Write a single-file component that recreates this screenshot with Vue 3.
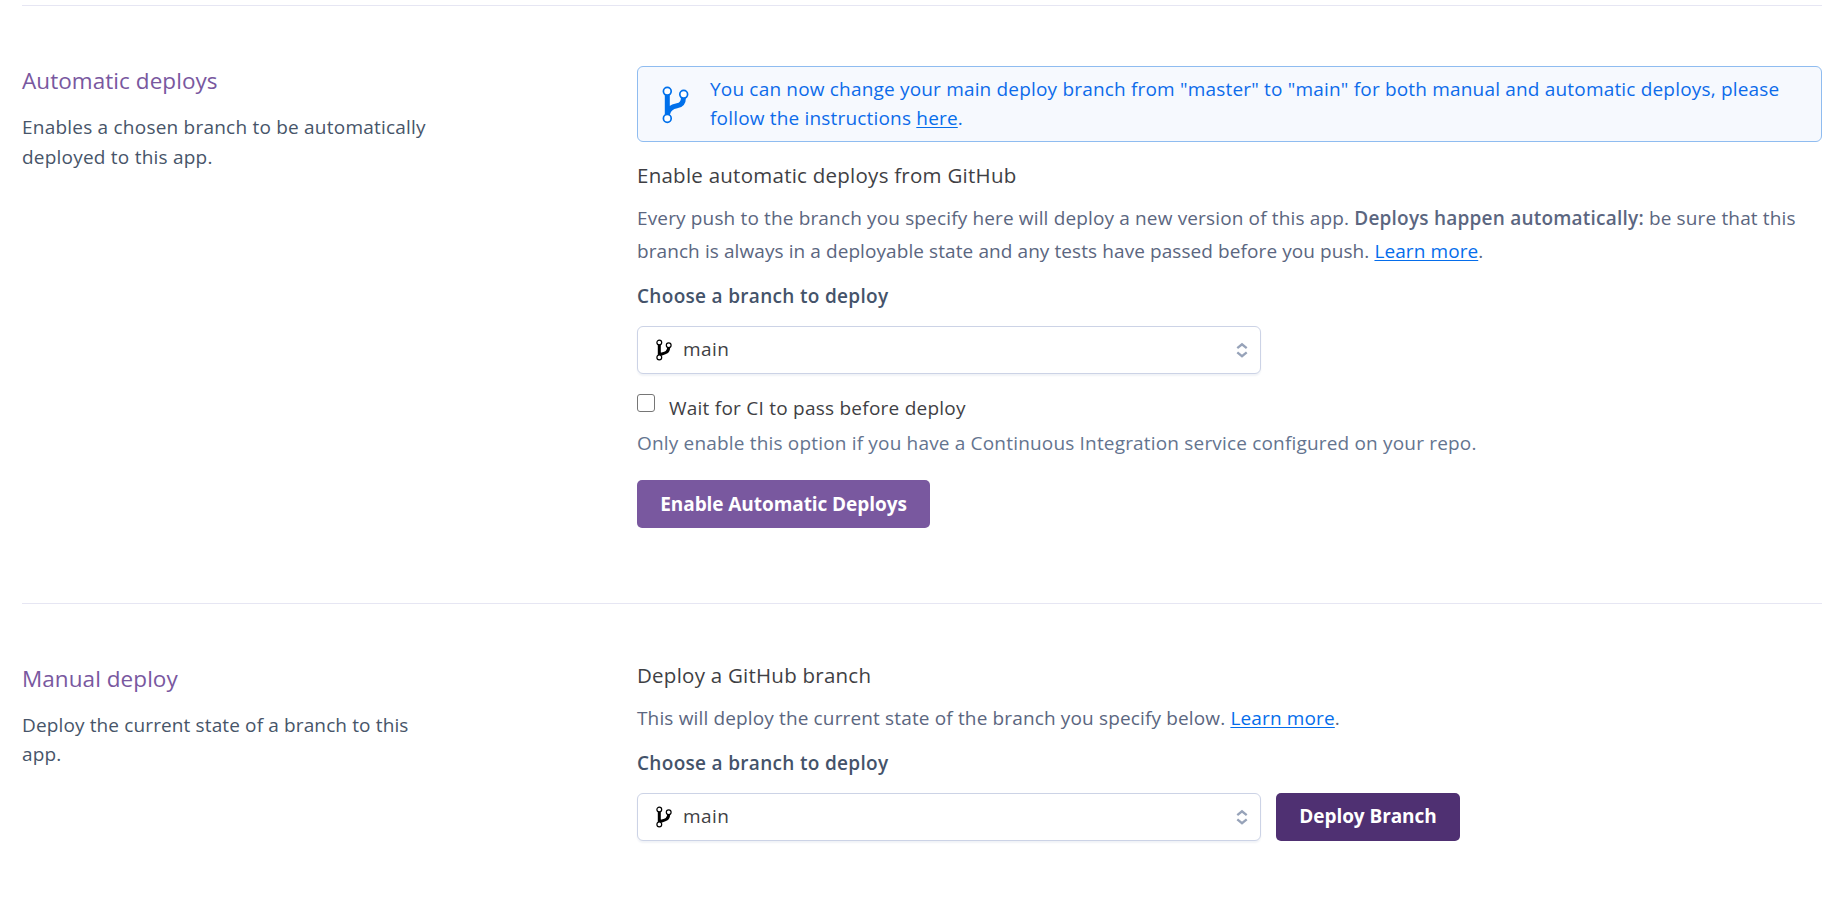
<script setup>
const autoDesc = ['Enables a chosen branch to be automatically', 'deployed to this app.']
const manualDesc = ['Deploy the current state of a branch to this', 'app.']
</script>

<template>
  <main class="page">
    <section class="row">
      <div class="side">
        <h2 class="title">Automatic deploys</h2>
        <p class="desc"><span v-for="l in autoDesc" :key="l">{{ l }}</span></p>
      </div>
      <div class="body">
        <div class="alert">
          <svg class="alert-icon" viewBox="0 0 28 38">
            <path d="M6.300 8V30M22.500 11C22.500 17 20 19.300 16 19.700C10 20.500 7.300 23 6.300 28.500" fill="none" stroke="currentColor" stroke-width="5" />
            <g class="rings"><circle cx="6.300" cy="5.300" r="3.900" /><circle cx="22.700" cy="8.300" r="3.900" /><circle cx="6.300" cy="32.400" r="3.900" /></g>
          </svg>
          <p class="alert-text">
            <span class="a1">You can now change your main deploy branch from "master" to "main" for both manual and automatic deploys, please</span>
            <span class="a2">follow the instructions <a>here</a>.</span>
          </p>
        </div>
        <h3 class="heading h-auto">Enable automatic deploys from GitHub</h3>
        <p class="copy">
          <span class="c1">Every push to the branch you specify here will deploy a new version of this app. <b>Deploys happen automatically:</b> be sure that this</span>
          <span class="c2">branch is always in a deployable state and any tests have passed before you push. <a>Learn more</a>.</span>
        </p>
        <div class="label">Choose a branch to deploy</div>
        <div class="select">
          <svg class="branch" viewBox="0 0 16 22">
            <path d="M3.300 5V17M12.700 8C12.700 14.500 8 14.200 3.500 15.500" fill="none" stroke="currentColor" stroke-width="3" />
            <g class="rings"><circle cx="3.300" cy="3.500" r="2.400" /><circle cx="12.700" cy="6.300" r="2.400" /><circle cx="3.300" cy="18.400" r="2.400" /></g>
          </svg>
          <span class="value">main</span>
          <svg class="arrows" viewBox="0 0 12 16"><path d="M1.300 6.200 6 2.300l4.700 3.900M1.300 10.300 6 14.200l4.700-3.900" /></svg>
        </div>
        <div class="check"><span class="box"></span><span class="wait">Wait for CI to pass before deploy</span></div>
        <div class="hint">Only enable this option if you have a Continuous Integration service configured on your repo.</div>
        <button class="btn enable"><span>Enable Automatic Deploys</span></button>
      </div>
    </section>
    <section class="row">
      <div class="side">
        <h2 class="title">Manual deploy</h2>
        <p class="desc manual"><span v-for="l in manualDesc" :key="l">{{ l }}</span></p>
      </div>
      <div class="body manual-body">
        <h3 class="heading h-manual">Deploy a GitHub branch</h3>
        <p class="copy">
          <span class="c3">This will deploy the current state of the branch you specify below. <a>Learn more</a>.</span>
        </p>
        <div class="label">Choose a branch to deploy</div>
        <div class="controls">
          <div class="select">
            <svg class="branch" viewBox="0 0 16 22">
              <path d="M3.300 5V17M12.700 8C12.700 14.500 8 14.200 3.500 15.500" fill="none" stroke="currentColor" stroke-width="3" />
              <g class="rings"><circle cx="3.300" cy="3.500" r="2.400" /><circle cx="12.700" cy="6.300" r="2.400" /><circle cx="3.300" cy="18.400" r="2.400" /></g>
            </svg>
            <span class="value">main</span>
            <svg class="arrows" viewBox="0 0 12 16"><path d="M1.300 6.200 6 2.300l4.700 3.900M1.300 10.300 6 14.200l4.700-3.900" /></svg>
          </div>
          <button class="btn deploy"><span>Deploy Branch</span></button>
        </div>
      </div>
    </section>
  </main>
</template>

<style>
body { background: #fff; }
</style>

<style scoped>
.page {
  box-sizing: border-box;
  height: 898px;
  padding: 5px 18px 0 22px;
  overflow: hidden;
  font-family: "Open Sans", "Noto Sans", sans-serif;
  font-size: 19px;
  color: #3f3f44;
}
.page * { box-sizing: border-box; }
h2, h3, p { margin: 0; font-weight: 400; }
span { white-space: nowrap; }
.row { display: flex; height: 598px; border-top: 1px solid #e6e6f3; padding-top: 60px; }
.side { width: 615px; flex: none; }
.body { flex: 1; }
.manual-body { margin-top: -4px; }
.title { font-size: 22.500px; line-height: 30px; letter-spacing: 0.060px; color: #79589f; }
.desc { margin-top: 16px; letter-spacing: 0.220px; color: #475569; }
.desc span, .copy span, .alert-text span { display: block; }
.desc span { line-height: 30px; }
.manual { margin-top: 17px; letter-spacing: 0.130px; }
.manual span { line-height: 29px; }
.alert {
  display: flex;
  align-items: flex-start;
  height: 76px;
  border: 1px solid #8fbcf0;
  border-radius: 6px;
  background: #f6f9fe;
  color: #0d6bea;
}
.alert-icon { width: 28px; height: 38px; margin: 19px 21px 0 23px; color: #0070eb; }
.rings { fill: #fff; stroke: currentColor; stroke-width: 1.200; }
.alert-icon .rings { stroke-width: 1.700; }
.alert-text { margin-top: 8px; line-height: 29px; letter-spacing: 0.180px; }
a { text-decoration: underline; text-underline-offset: 2px; color: #056deb; }
.heading { margin-top: 18px; font-size: 20.500px; line-height: 30px; letter-spacing: 0.250px; }
.h-manual { margin-top: 0; letter-spacing: 0.240px; }
.copy { margin-top: 12px; line-height: 33px; color: #5b6680; }
.c1 { letter-spacing: 0.148px; }
.c1 b { font-weight: 600; letter-spacing: 0.220px; }
.c2 { letter-spacing: 0.084px; }
.c3 { letter-spacing: 0.145px; }
.label { margin-top: 13px; line-height: 30px; font-weight: 600; letter-spacing: 0.310px; color: #44536a; }
.select {
  display: flex;
  align-items: center;
  width: 624px;
  height: 48px;
  margin-top: 15px;
  padding: 0 12px 0 18px;
  border: 1px solid #ccd3e6;
  border-radius: 6px;
  background: #fff;
  box-shadow: 0 2px 2px #f1f3f7;
}
.branch { width: 16px; height: 22px; margin-right: 11px; color: #000; }
.value { padding-bottom: 2px; letter-spacing: 0.400px; }
.arrows { width: 12px; height: 16px; margin-left: auto; fill: none; stroke: #97a3b9; stroke-width: 2.300; }
.check { display: flex; align-items: flex-start; margin-top: 18px; height: 36px; }
.box { width: 18px; height: 18px; margin: 2px 14px 0 0; border: 1.500px solid #767676; border-radius: 3px; }
.wait { padding-top: 1px; line-height: 30px; letter-spacing: 0.240px; }
.hint { line-height: 30px; white-space: nowrap; letter-spacing: 0.177px; color: #64748f; }
.btn {
  display: flex;
  align-items: center;
  justify-content: center;
  height: 48px;
  border: 0;
  border-radius: 5px;
  font: 700 19px "Open Sans", "Noto Sans", sans-serif;
  letter-spacing: -0.070px;
  color: #fff;
}
.enable { width: 293px; margin-top: 22px; background: #79589f; }
.controls { display: flex; gap: 15px; margin-top: 15px; }
.controls .select { margin-top: 0; }
.deploy { width: 184px; padding-bottom: 3px; background: #4f3072; }
</style>
